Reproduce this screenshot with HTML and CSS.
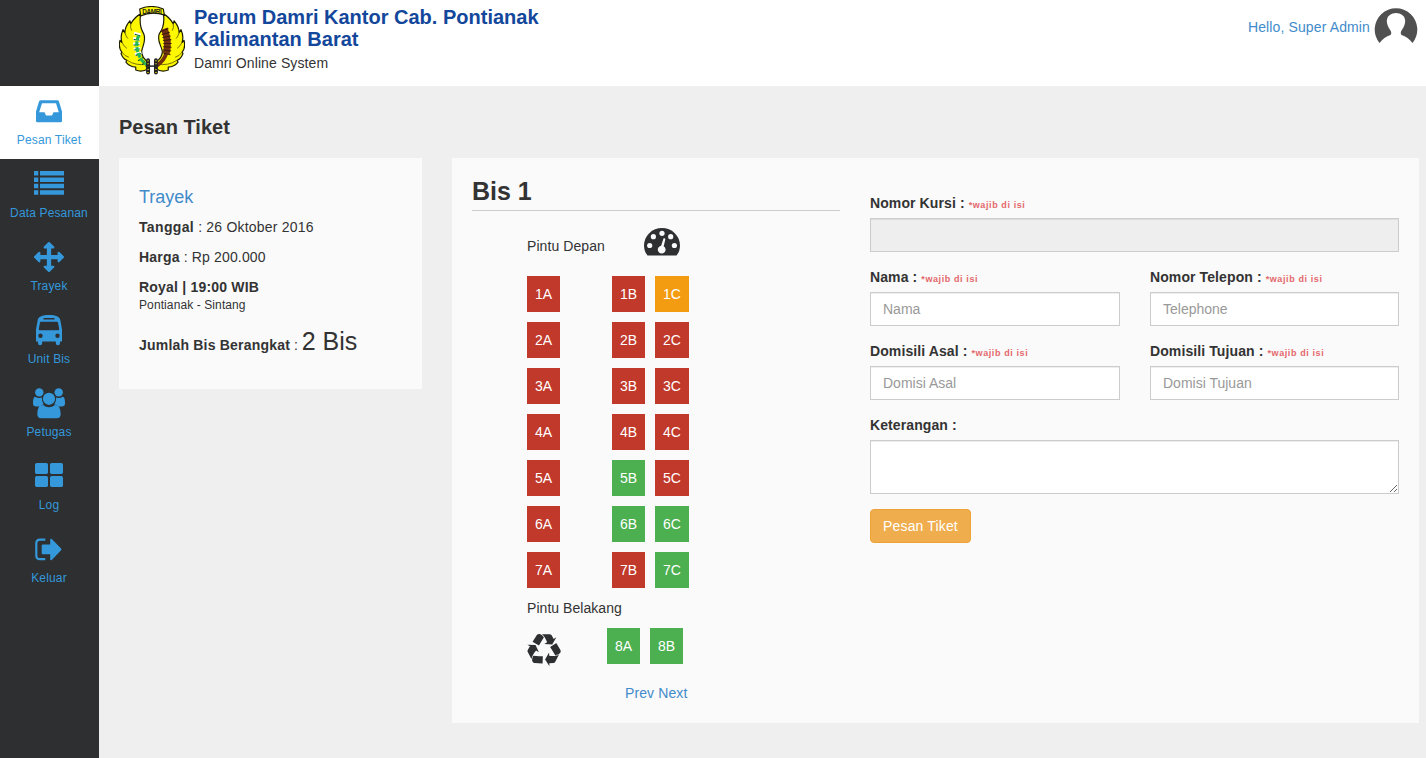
FILE: index.html
```html
<!DOCTYPE html>
<html lang="id">
<head>
<meta charset="utf-8">
<title>Pesan Tiket</title>
<link rel="stylesheet" href="styles.css">
</head>
<body>
<div class="app">
  <nav class="sidebar">
    <a class="nav-item active"><svg class="nav-icon" viewBox="0 0 32 32"><path fill-rule="evenodd" d="M7.800 4.200h16.400q1.200 0 1.700 1.100l3.100 10.200v9.400q0 1.300-1.300 1.300H4.300Q3 26.200 3 24.900v-9.400L6.100 5.300q.5-1.100 1.700-1.100zM9 7.200L6.200 16.300h5.300l1.500 3.300h6l1.500-3.300h5.300L23 7.200z"/></svg><span>Pesan Tiket</span></a>
    <a class="nav-item"><svg class="nav-icon" viewBox="0 0 32 32"><path d="M1 2h4.300v4.500H1zM7 2h24v4.500H7zM1 8.400h4.300v4.500H1zM7 8.400h24v4.500H7zM1 14.800h4.300v4.500H1zM7 14.800h24v4.500H7zM1 21.200h4.300v4.500H1zM7 21.200h24v4.500H7z"/></svg><span>Data Pesanan</span></a>
    <a class="nav-item"><svg class="nav-icon" viewBox="-56 0 1905 1905"><path d="M1792 896q0 26-19 45l-256 256q-19 19-45 19t-45-19-19-45v-128h-384v384h128q26 0 45 19t19 45-19 45l-256 256q-19 19-45 19t-45-19l-256-256q-19-19-19-45t19-45 45-19h128v-384h-384v128q0 26-19 45t-45 19-45-19l-256-256q-19-19-19-45t19-45l256-256q19-19 45-19t45 19 19 45v128h384v-384h-128q-26 0-45-19t-19-45 19-45l256-256q19-19 45-19t45 19l256 256q19 19 19 45t-19 45-45 19h-128v384h384v-128q0-26 19-45t45-19 45 19l256 256q19 19 19 45z"/></svg><span>Trayek</span></a>
    <a class="nav-item"><svg class="nav-icon" viewBox="0 0 32 32"><path fill-rule="evenodd" d="M16 0c7 0 10.500 1.500 11.300 5L29 14.500v12h-2V28q0 2.200-2.100 2.200T22.800 28v-1.500H9.200V28q0 2.200-2.100 2.200T5 28v-1.500H3v-12L4.700 5C5.500 1.500 9 0 16 0zM10.500 3v1.500h11V3zM8 6.800Q7.200 6.800 7 7.600L5.800 14q-.1 1.300 1 1.300h18.400q1.100 0 1-1.300L25 7.600q-.2-.8-1-.8zM7.500 18.500a2.200 2.200 0 1 0 0 4.400 2.200 2.200 0 0 0 0-4.400zM24.500 18.500a2.200 2.200 0 1 0 0 4.400 2.200 2.200 0 0 0 0-4.400z"/></svg><span>Unit Bis</span></a>
    <a class="nav-item"><svg class="nav-icon" viewBox="0 0 32 32"><circle cx="6.300" cy="4.400" r="4.200"/><circle cx="25.700" cy="4.400" r="4.200"/><circle cx="16" cy="10.800" r="6.100"/><path d="M2.200 8.700q2 1.400 4.300 1.300 1.400 0 2.300-.4-.2 4.300 2 7-2.700 0-4.300 1.800H3.300Q0 18.400 0 15.500 0 8.500 2.200 8.700zM29.800 8.700q-2 1.400-4.300 1.300-1.400 0-2.300-.4.200 4.300-2 7 2.700 0 4.300 1.800h3.200q3.300 0 3.300-2.900 0-7-2.200-6.800zM10 16.900q3 2.300 6 2.300t6-2.300q5.500 0 5.700 9.100 0 4.200-4 4.200H8.300q-4 0-4-4.200 0-9.100 5.700-9.100z"/></svg><span>Petugas</span></a>
    <a class="nav-item"><svg class="nav-icon" viewBox="0 0 32 32"><rect x="2" y="2" width="13" height="11" rx="1.700"/><rect x="17" y="2" width="13" height="11" rx="1.700"/><rect x="2" y="15" width="13" height="11" rx="1.700"/><rect x="17" y="15" width="13" height="11" rx="1.700"/></svg><span>Log</span></a>
    <a class="nav-item"><svg class="nav-icon" viewBox="0 0 32 32"><path class="stroke" d="M12.300 5.700H7q-3.700 0-3.700 3.700v12q0 3.700 3.700 3.700h5.300"/><path d="M17.200 5.200v5.300H9.700q-1 0-1 1v7.800q0 1 1 1h7.500v5.300q.3 1.300 1.600.4l9.300-9.700q.6-.9 0-1.700l-9.300-9.500q-1.300-.9-1.600.1z"/></svg><span>Keluar</span></a>
  </nav>

  <div class="main">
    <header class="topbar">
      <svg class="logo" viewBox="0 0 67 70">
        <g fill="#fdf800" stroke="#1c1c00" stroke-width="1.200" stroke-linejoin="round">
          <path d="M22 8Q16 11 12 18L11 15Q6 21 6 27L4 24Q1 31 3 37L1 35Q-1 42 3 47L2 48Q4 54 8 55L7 57Q11 62 17 62L17 65Q24 68 30 63V57Q23 53 23 46C24 40 28 35 25 28Q20 20 22 8Z"/>
          <path d="M45 8Q51 11 55 18L56 15Q61 21 61 27L63 24Q66 31 64 37L66 35Q68 42 64 47L65 48Q63 54 59 55L60 57Q56 62 50 62L50 65Q43 68 37 63V57Q44 53 44 46C43 40 38 35 41 28Q47 20 45 8Z"/>
          <path d="M21 3Q33-2 45 3L46 9Q33 5 22 10Z"/>
        </g>
        <path fill="none" stroke="#55500a" stroke-width=".8" d="M12 18Q11 22 13 25M6 27Q7 31 9 33M3 37Q5 41 8 43M3 47Q6 51 10 52M8 55Q17 61 28 59M55 18Q56 22 54 25M61 27Q60 31 58 33M64 37Q62 41 59 43M64 47Q61 51 57 52M59 55Q50 61 39 59"/>
        <path fill="none" stroke="#fff" stroke-width="7" stroke-dasharray="3 2" d="M19 27Q16 38 20 50"/>
        <path fill="none" stroke="#064f22" stroke-width="6" stroke-dasharray="1 4" d="M19 29Q16 38 20 50Q22 56 28 59"/>
        <path fill="none" stroke="#22b65a" stroke-width="3.200" stroke-dasharray="5 1" d="M20 30Q16 39 20 49Q22 56 29 60"/>
        <path fill="none" stroke="#71300f" stroke-width="7" d="M46 23Q51 36 48 48"/>
        <path fill="none" stroke="#71300f" stroke-width="4" d="M48 48Q46 55 39 60"/>
        <path fill="none" stroke="#32150d" stroke-width="8.500" stroke-dasharray="1 2.500" d="M46 24Q51 36 48 49"/>
        <path stroke="#222" stroke-width="4" stroke-linecap="round" d="M29.500 55v12.500M37.500 55v12.500"/>
        <path stroke="#b6a020" stroke-width="2" stroke-dasharray="1 2" d="M29.500 55v13M37.500 55v13"/>
        <path stroke="#222" stroke-width="1.500" d="M27 61h13"/>
        <text class="logo-text" x="33.500" y="7.600" text-anchor="middle" textLength="20">DAMRI</text>
      </svg>
      <div class="brand">
        <h1>Perum Damri Kantor Cab. Pontianak<br>Kalimantan Barat</h1>
        <p>Damri Online System</p>
      </div>
      <div class="user"><a>Hello, Super Admin</a>
        <svg class="avatar" viewBox="0 0 44 37"><path fill="#505050" d="M5.500 36A21.300 21.300 0 1 1 38.500 36Q34 30 27.500 28Q26 26 27.500 23.500Q32 17 31 12.500Q29.500 6 22 6Q14.500 6 13 12.500Q12 17 16.500 23.500Q18 26 16.500 28Q10 30 5.500 36Z"/></svg>
      </div>
    </header>

    <main class="content">
      <h2>Pesan Tiket</h2>
      <div class="panels">
        <section class="card trip">
          <h3>Trayek</h3>
          <p><b>Tanggal</b> : 26 Oktober 2016</p>
          <p><b>Harga</b> : Rp 200.000</p>
          <p><b>Royal | 19:00 WIB</b><br><small>Pontianak - Sintang</small></p>
          <p class="total"><b>Jumlah Bis Berangkat</b> : <span>2 Bis</span></p>
        </section>
        <section class="card booking">
          <div class="bus">
            <h2>Bis 1</h2>
            <div class="seats">
              <div class="front"><span>Pintu Depan</span>
                <svg class="gauge" viewBox="0 0 36 28"><path fill="#2d2f31" d="M3.500 27.500Q0 23.500 0 17.500A18 17.500 0 0 1 36 17.500Q36 23.500 32.500 27.500z"/><g fill="#fafafa"><circle cx="5.700" cy="17.500" r="2.600"/><circle cx="9.400" cy="8.700" r="2.600"/><circle cx="18" cy="5.300" r="2.600"/><circle cx="26.700" cy="8.700" r="2.600"/><circle cx="30.400" cy="17.500" r="2.600"/><path d="M19.600 10.300q1.700-.4 1.700 1.200l-1.600 6.800a3.900 3.900 0 1 1-2.600-.5z"/></g></svg>
              </div>
              <div class="row"><i class="seat">1A</i><i class="seat">1B</i><i class="seat picked">1C</i></div>
              <div class="row"><i class="seat">2A</i><i class="seat">2B</i><i class="seat">2C</i></div>
              <div class="row"><i class="seat">3A</i><i class="seat">3B</i><i class="seat">3C</i></div>
              <div class="row"><i class="seat">4A</i><i class="seat">4B</i><i class="seat">4C</i></div>
              <div class="row"><i class="seat">5A</i><i class="seat free">5B</i><i class="seat">5C</i></div>
              <div class="row"><i class="seat">6A</i><i class="seat free">6B</i><i class="seat free">6C</i></div>
              <div class="row"><i class="seat">7A</i><i class="seat">7B</i><i class="seat free">7C</i></div>
              <div class="back-label">Pintu Belakang</div>
              <div class="row back">
                <svg class="recycle" viewBox="0 0 1792 1792"><path fill="#2d2f31" d="M836 1169l-15 368-2 22-420-29q-36-3-67-31.500t-47-65.500q-11-27-14.500-55t4-65 12-55 21.500-64 19-53q78 12 509 28zm-387-586l180 379-147-92q-63 72-111.500 144.500t-72.500 125-39.500 94.500-18.500 63l-4 21-190-357q-17-26-18-56t6-47l8-18q35-63 114-188l-140-86zm1231 517l-188 359q-12 29-36.500 46.500t-43.500 20.500l-18 4q-71 7-219 12l8 164-230-367 211-362 7 173q170 16 283 5t170-33zm-785-924q-47 63-265 435l-317-187-19-12 225-356q20-31 60-45t80-10q24 2 48.500 12t42 21 41.500 33 36 34.500 36 39.500 32 35zm655 307l212 363q18 37 12.500 76t-27.500 74q-13 20-33 37t-38 28-48.500 22-47 16-51.500 14-46 12q-34-72-265-436l313-195zm-143-226l142-83-220 373-419-20 151-86q-34-89-75-166t-75.500-123.500-64.500-80-47-46.500l-17-13 405 1q31-3 58 10.500t39 28.500l11 15q39 61 112 190z"/></svg>
                <i class="seat free">8A</i><i class="seat free">8B</i>
              </div>
              <div class="pager"><a>Prev</a> <a>Next</a></div>
            </div>
          </div>
          <form class="form">
            <div class="field wide"><label>Nomor Kursi : <small>*wajib di isi</small></label><input type="text" disabled></div>
            <div class="field"><label>Nama : <small>*wajib di isi</small></label><input type="text" placeholder="Nama"></div>
            <div class="field"><label>Nomor Telepon : <small>*wajib di isi</small></label><input type="text" placeholder="Telephone"></div>
            <div class="field"><label>Domisili Asal : <small>*wajib di isi</small></label><input type="text" placeholder="Domisi Asal"></div>
            <div class="field"><label>Domisili Tujuan : <small>*wajib di isi</small></label><input type="text" placeholder="Domisi Tujuan"></div>
            <div class="field wide"><label>Keterangan :</label><textarea></textarea></div>
            <button type="button">Pesan Tiket</button>
          </form>
        </section>
      </div>
    </main>
  </div>
</div>
</body>
</html>
```
FILE: styles.css
```css
* { box-sizing: border-box; }
body { margin: 0; background: #efefef; color: #333; font: 14px/20px "Liberation Sans", Arial, sans-serif; }
h1, h2, h3, p { margin: 0; }
a { color: #428bca; text-decoration: none; }
.app { display: flex; height: 758px; overflow: hidden; }
.sidebar { width: 99px; flex: none; background: #2d2f31; padding-top: 86px; }
.nav-item { display: flex; flex-direction: column; align-items: center; height: 73px; padding: 10px 1px 0 0; color: #3498db; font-size: 12px; line-height: 17px; letter-spacing: .15px; }
.nav-item span { margin-top: 4px; }
.nav-item.active { background: #fff; }
.nav-icon { width: 32px; height: 32px; fill: #3498db; flex: none; }
.stroke { fill: none; stroke: #3498db; stroke-width: 2.200; }
.main { flex: 1; min-width: 0; }
.topbar { display: flex; height: 86px; background: #fff; padding: 6px 8px 0 20px; }
.logo { width: 66px; height: 69px; flex: none; }
.logo-text { font: bold 6.500px "Liberation Sans", Arial, sans-serif; fill: #222; }
.brand { margin-left: 9px; }
.brand h1 { font-size: 20px; line-height: 22px; color: #13479b; }
.brand p { margin-top: 3px; letter-spacing: .1px; }
.user { display: flex; margin-left: auto; padding-top: 1px; }
.user a { padding-top: 10px; letter-spacing: .12px; }
.avatar { width: 44px; height: 37px; margin-left: 4px; }
.content { padding: 30px 7px 0 20px; }
.content > h2 { font-size: 20px; line-height: 22px; }
.panels { display: flex; align-items: flex-start; gap: 30px; margin-top: 20px; }
.card { background: #fafafa; }
.trip { width: 303px; height: 231px; padding: 29px 20px 0; flex: none; }
.trip h3 { color: #428bca; font-size: 18px; font-weight: normal; line-height: 20px; margin-bottom: 10px; }
.trip p { margin-bottom: 10px; letter-spacing: .15px; }
.trip b { letter-spacing: .2px; }
.trip p:nth-of-type(1) { letter-spacing: .2px; }
.trip p:nth-of-type(1) b { letter-spacing: .35px; }
.trip small { font-size: 12px; line-height: 16px; display: block; letter-spacing: .1px; }
.trip .total { line-height: 36px; letter-spacing: 0; }
.total span { font-size: 25px; }
.booking { display: flex; flex: 1; height: 565px; padding: 0 20px; }
.bus { width: 368px; flex: none; padding-top: 20px; }
.bus h2 { height: 33px; font-size: 25px; line-height: 27px; border-bottom: 1px solid #ccc; }
.seats { padding: 17px 0 0 55px; }
.front { display: flex; height: 48px; }
.front span { width: 117px; padding-top: 8px; letter-spacing: .08px; }
.gauge { width: 36px; height: 28px; }
.row { display: flex; gap: 10px; height: 46px; }
.row .seat:first-child { margin-right: 42px; }
.seat { width: 33px; height: 36px; background: #c0392b; color: #fff; font-style: normal; line-height: 36px; text-align: center; }
.seat.picked { background: #f39c12; }
.row .seat:nth-child(3) { width: 34px; }
.seat.free { background: #4caf50; }
.back-label { height: 30px; letter-spacing: .05px; }
.row.back .seat:nth-child(3) { width: 33px; }
.recycle { width: 34px; height: 34px; margin: 6px 36px 0 0; }
.pager { padding: 9px 0 0 98px; letter-spacing: .1px; }
.form { margin: 35px 0 0 30px; flex: 1; display: grid; grid-template-columns: 250px 249px; column-gap: 30px; grid-auto-rows: max-content; align-content: start; }
.field { height: 74px; }
.field.wide { grid-column: 1 / -1; }
.field label { display: block; height: 20px; font-weight: bold; letter-spacing: .1px; margin-bottom: 5px; }
.field.wide:first-child label { margin-bottom: 5px; }
.field small { color: #e4686c; font-size: 9px; line-height: 1; letter-spacing: .6px; }
.field input, .field textarea { display: block; width: 100%; height: 34px; margin: 0; border: 1px solid #ccc; border-radius: 0; padding: 6px 12px; background: #fff; box-shadow: inset 0 1px 1px rgba(0,0,0,.075); font: inherit; color: #555; }
.field input:disabled { background: #eee; }
.field input::placeholder { color: #999; }
.field textarea { height: 54px; }
.field:nth-of-type(6) { height: 94px; }
.form button { width: 101px; height: 34px; border: 1px solid #eea236; border-radius: 4px; background: #f0ad4e; color: #fff; font: inherit; letter-spacing: .15px; padding: 0; }
```
